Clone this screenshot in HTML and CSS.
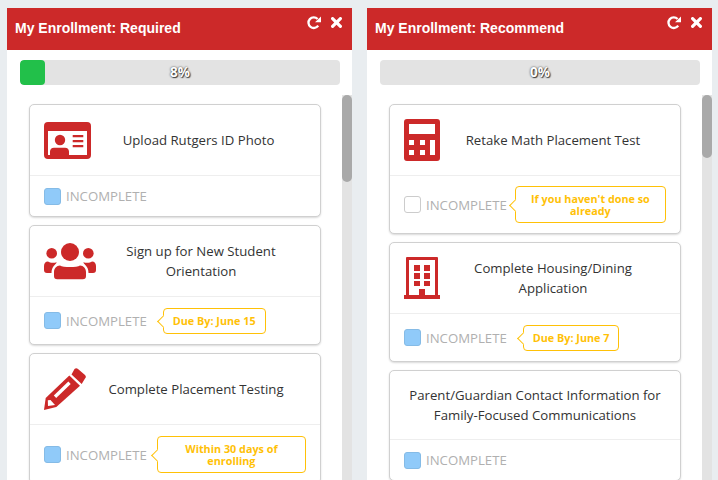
FILE: index.html
```html
<!DOCTYPE html>
<html lang="en">
<head>
<meta charset="utf-8">
<title>My Enrollment</title>
<link rel="stylesheet" href="styles.css">
</head>
<body>
<main class="page">
  <section class="panel">
    <header class="panel-head">
      <h2 class="panel-title">My Enrollment: Required</h2>
      <div class="panel-tools">
        <svg class="tool-refresh" viewBox="0 0 14 14"><path d="M11.2 9.6A5.3 5.3 0 1 1 10.6 3" fill="none" stroke="#fff" stroke-width="2.3"/><path d="M8 6.3 14 .4V6.3Z" fill="#fff"/></svg>
        <svg class="tool-close" viewBox="0 0 11 11"><path d="M1.6 1.6 9.4 9.4M9.4 1.6 1.6 9.4" stroke="#fff" stroke-width="3.2" stroke-linecap="round"/></svg>
      </div>
    </header>
    <div class="progress"><div class="progress-fill" style="width:25px"></div><span class="progress-label">8%</span></div>
    <div class="list">
      <article class="card">
        <div class="card-main">
          <svg class="icon icon-id" viewBox="0 0 47 37"><path fill-rule="evenodd" fill="#cc2929" d="M4 0H43A4 4 0 0 1 47 4V33A4 4 0 0 1 43 37H4A4 4 0 0 1 0 33V4A4 4 0 0 1 4 0ZM4 9V33H43V9Z"/><circle cx="16" cy="18" r="5.2" fill="#cc2929"/><path fill="#cc2929" d="M6 33V29.500A4 4 0 0 1 10 25.700H21A4 4 0 0 1 25 29.500V33Z"/><path fill="#cc2929" d="M28.700 13H39.300V15.300H28.700ZM28.700 18H39.300V20.300H28.700ZM28.700 23H39.300V25.300H28.700Z"/></svg>
          <p class="card-title">Upload Rutgers ID Photo</p>
        </div>
        <div class="card-foot"><span class="check check-on"></span><span class="status">INCOMPLETE</span></div>
      </article>
      <article class="card">
        <div class="card-main">
          <svg class="icon icon-users" viewBox="0 0 52 37"><g fill="#cc2929"><circle cx="26" cy="9" r="9"/><circle cx="7.700" cy="10.300" r="5.300"/><circle cx="44.300" cy="10.300" r="5.300"/><path d="M16 22.500C19 24.500 33 24.500 36 22.500C39.500 22.500 42 25.500 42 29V33A3.300 3.300 0 0 1 38.700 36.300H13.300A3.300 3.300 0 0 1 10 33V29C10 25.500 12.500 22.500 16 22.500Z"/><path d="M4 18.500C6 20 10 20 12.600 19.200 12.600 20.600 10.500 21.500 8.500 25 7.800 26.500 7.600 28 7.500 30H3A3 3 0 0 1 0 27V23C0 20.500 1.500 18.500 4 18.500Z"/><path d="M48 18.500C46 20 42 20 39.400 19.200 39.400 20.600 41.500 21.500 43.500 25 44.200 26.500 44.400 28 44.500 30H49A3 3 0 0 0 52 27V23C52 20.500 50.500 18.500 48 18.500Z"/></g></svg>
          <p class="card-title">Sign up for New Student Orientation</p>
        </div>
        <div class="card-foot"><span class="check check-on"></span><span class="status">INCOMPLETE</span><span class="note note-short">Due By: June 15</span></div>
      </article>
      <article class="card">
        <div class="card-main">
          <svg class="icon icon-pencil" viewBox="0 0 42 42"><g fill="#cc2929"><path d="M1.700 30 25.300 7.500 36 17.700 12.300 39 0 42Z"/><path d="M30.500 1 A2.500 2.500 0 0 1 34 1L41 7A2.500 2.500 0 0 1 41 10.500L37.700 16 27.500 6.500Z"/></g><path d="M11 28.700 25.500 14.700" stroke="#fff" stroke-width="3.400" fill="none"/><path d="M3.800 32.200 6.500 32 11 37 4 38Z" fill="#fff"/></svg>
          <p class="card-title">Complete Placement Testing</p>
        </div>
        <div class="card-foot card-foot-low"><span class="check check-on"></span><span class="status">INCOMPLETE</span><span class="note note-fill-wide">Within 30 days of enrolling</span></div>
      </article>
    </div>
    <div class="scrollbar"><div class="scroll-thumb scroll-thumb-long"></div></div>
  </section>
  <section class="panel">
    <header class="panel-head">
      <h2 class="panel-title">My Enrollment: Recommend</h2>
      <div class="panel-tools">
        <svg class="tool-refresh" viewBox="0 0 14 14"><path d="M11.2 9.600A5.300 5.300 0 1 1 10.600 3" fill="none" stroke="#fff" stroke-width="2.300"/><path d="M8 6.300 14 .4V6.300Z" fill="#fff"/></svg>
        <svg class="tool-close" viewBox="0 0 11 11"><path d="M1.600 1.600 9.400 9.400M9.400 1.600 1.600 9.400" stroke="#fff" stroke-width="3.200" stroke-linecap="round"/></svg>
      </div>
    </header>
    <div class="progress"><span class="progress-label">0%</span></div>
    <div class="list">
      <article class="card">
        <div class="card-main">
          <svg class="icon icon-calc" viewBox="0 0 36 42"><path fill-rule="evenodd" fill="#cc2929" d="M3 0H33A3 3 0 0 1 36 3V39A3 3 0 0 1 33 42H3A3 3 0 0 1 0 39V3A3 3 0 0 1 3 0ZM5 5V15H31V5ZM5 21V26H10V21ZM16 21V26H21V21ZM26 21V36H31V21ZM5 31V36H10V31ZM16 31V36H21V31Z"/></svg>
          <p class="card-title">Retake Math Placement Test</p>
        </div>
        <div class="card-foot"><span class="check"></span><span class="status">INCOMPLETE</span><span class="note note-fill">If you haven't done so already</span></div>
      </article>
      <article class="card">
        <div class="card-main">
          <svg class="icon icon-building" viewBox="0 0 36 42"><path fill-rule="evenodd" fill="#cc2929" d="M3 0H33A1 1 0 0 1 34 1V38H36V42H0V38H2V1A1 1 0 0 1 3 0ZM5 3V38H15V32H21V38H31V3ZM10 8H16V14H10ZM20 8H26V14H20ZM10 16H16V22H10ZM20 16H26V22H20ZM10 24H16V29H10ZM20 24H26V29H20Z"/></svg>
          <p class="card-title">Complete Housing/Dining Application</p>
        </div>
        <div class="card-foot"><span class="check check-on"></span><span class="status">INCOMPLETE</span><span class="note note-short">Due By: June 7</span></div>
      </article>
      <article class="card">
        <div class="card-main">
          <p class="card-title">Parent/Guardian Contact Information for Family-Focused Communications</p>
        </div>
        <div class="card-foot"><span class="check check-on"></span><span class="status">INCOMPLETE</span></div>
      </article>
    </div>
    <div class="scrollbar"><div class="scroll-thumb scroll-thumb-short"></div></div>
  </section>
</main>
</body>
</html>
```
FILE: styles.css
```css
* { box-sizing: border-box; }
html, body { margin: 0; height: 100%; }
body {
  background: #e9edf0;
  font-family: "Open Sans", sans-serif;
  color: #333;
  overflow: hidden;
}
.page {
  display: flex;
  gap: 15px;
  padding: 8px 0 0 7px;
  height: 480px;
  overflow: hidden;
}
.panel {
  position: relative;
  flex: 0 0 345px;
  background: #fff;
  height: 600px;
}
.panel-head {
  display: flex;
  justify-content: space-between;
  height: 42px;
  background: #cc2929;
  padding: 0 10px 0 8px;
}
.panel-title {
  margin: 12px 0 0;
  font: bold 14px/17px "Liberation Sans", Arial, sans-serif;
  color: #fff;
}
.panel-tools {
  display: flex;
  align-items: flex-start;
  gap: 10px;
  padding-top: 8px;
}
.tool-refresh { width: 14px; height: 14px; }
.tool-close { width: 11px; height: 11px; margin-top: 1px; }
.progress {
  position: relative;
  height: 25px;
  margin: 10px 12px 0 13px;
  background: #e3e3e3;
  border-radius: 4px;
  overflow: hidden;
  text-align: center;
}
.progress-fill {
  position: absolute;
  left: 0;
  top: 0;
  bottom: 0;
  background: #22c04a;
  border-radius: 4px;
}
.progress-label {
  position: relative;
  font: bold 13.5px/25px "Open Sans", sans-serif;
  color: #fff;
  text-shadow: 0 0 2px #333, 1px 1px 1px #444;
}
.list {
  display: flex;
  flex-direction: column;
  gap: 8px;
  padding: 19px 0 0 22px;
  width: 314px;
}
.card {
  background: #fff;
  border: 1px solid #d0d0d0;
  border-radius: 5px;
  box-shadow: 0 1px 2px rgba(0, 0, 0, .15);
}
.card-main {
  display: flex;
  align-items: center;
  padding: 14px;
  min-height: 68px;
  border-bottom: 1px solid #eee;
}
.icon { flex: none; display: block; }
.icon-id { width: 47px; height: 37px; margin: 3px 0 2px; }
.icon-users { width: 52px; height: 37px; margin: 3px 0 2px; }
.icon-pencil { width: 42px; height: 42px; }
.icon-calc { width: 36px; height: 42px; }
.icon-building { width: 36px; height: 42px; }
.card-title {
  flex: 1;
  margin: 0;
  font-size: 13.2px;
  line-height: 20px;
  text-align: center;
  color: #333;
}
.card-foot {
  display: flex;
  align-items: center;
  padding: 10px 14px;
}
.card-foot-low { padding-top: 11px; }
.check {
  flex: none;
  width: 17px;
  height: 17px;
  border: 1px solid #ccc;
  border-radius: 3px;
  background: #fff;
}
.check-on {
  background: #90caf9;
  border-color: #85bbe6;
}
.status {
  flex: none;
  margin-left: 5px;
  font-size: 13.2px;
  line-height: 20px;
  color: #b0b0b0;
}
.note {
  position: relative;
  display: block;
  padding: 6px 9px;
  border: 1px solid #ffc107;
  border-radius: 4px;
  font-size: 10.8px;
  font-weight: 700;
  line-height: 11.5px;
  color: #ffc107;
  text-align: center;
}
.note::before {
  content: "";
  position: absolute;
  left: -5px;
  top: 50%;
  width: 8px;
  height: 8px;
  margin-top: -4px;
  background: #fff;
  border-left: 1px solid #ffc107;
  border-bottom: 1px solid #ffc107;
  transform: rotate(45deg);
}
.note-short { margin: 1px 0 0 16px; line-height: 12px; }
.note-fill { flex: 1; margin-left: 8px; }
.note-fill-wide { flex: 1; margin-left: 10px; }
.scrollbar {
  position: absolute;
  right: 0;
  top: 87px;
  bottom: 0;
  width: 10px;
  background: #e3e3e3;
}
.scroll-thumb {
  background: #a9a9a9;
  border-radius: 5px;
}
.scroll-thumb-long { height: 87px; }
.scroll-thumb-short { height: 63px; }
```
